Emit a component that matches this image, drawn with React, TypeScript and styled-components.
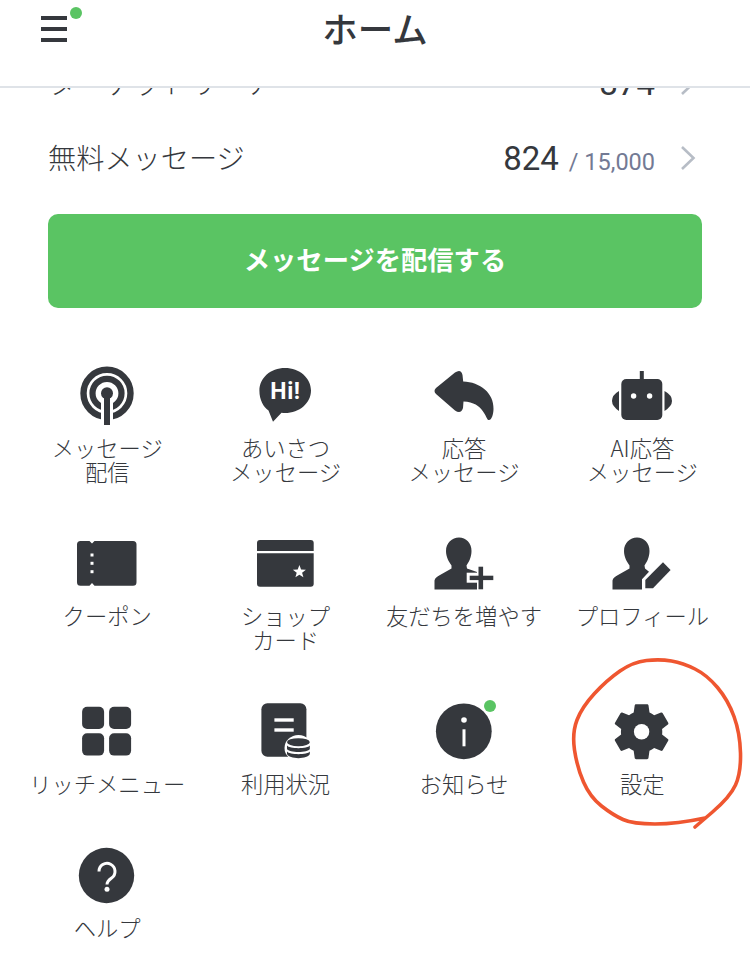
import React from "react";
import styled, { createGlobalStyle } from "styled-components";

const INK = "#35383d";
const GREEN = "#5ac463";

const Global = createGlobalStyle`
  html, body { margin: 0; padding: 0; background: #fff; }
  body { font-family: "Noto Sans CJK JP", "Noto Sans", sans-serif; color: ${INK}; }
`;

const Page = styled.div`
  position: relative;
  width: 750px;
  height: 963px;
  overflow: hidden;
  background: #fff;
`;

const Header = styled.header`
  height: 86px;
  display: flex;
  align-items: flex-start;
  justify-content: center;
  position: relative;
  border-bottom: 2px solid #dfe3e8;
  box-sizing: content-box;
`;

const Title = styled.h1`
  margin: 4px 0 0;
  font-size: 35.5px;
  line-height: 48px;
  font-weight: 500;
  color: ${INK};
`;

const MenuButton = styled.div`
  position: absolute;
  left: 41px;
  top: 16px;
  width: 26px;
  height: 26px;
  display: flex;
  flex-direction: column;
  justify-content: space-between;
`;

const MenuBar = styled.span`
  display: block;
  height: 4px;
  background: ${INK};
`;

const Dot = styled.span`
  position: absolute;
  left: 29px;
  top: -9px;
  width: 12px;
  height: 12px;
  border-radius: 50%;
  background: ${GREEN};
`;

const ClippedRow = styled.div`
  height: 33px;
  overflow: hidden;
  display: flex;
  flex-direction: column;
  justify-content: flex-end;
`;

const StatRow = styled.div`
  flex: none;
  height: 75px;
  padding: 0 54px 0 48px;
  display: flex;
  align-items: center;
  justify-content: space-between;
`;

const StatLabel = styled.span`
  font-size: 28.2px;
  font-weight: 300;
  line-height: 40px;
  padding-bottom: 4px;
`;

const StatValue = styled.div`
  display: flex;
  align-items: baseline;
  font-family: Roboto, sans-serif;
  padding-bottom: 1px;
`;

const StatNumber = styled.span`
  font-size: 33px;
  color: ${INK};
`;

const StatLimit = styled.span`
  font-size: 23.5px;
  color: #737a94;
  margin-left: 10px;
`;

const Chevron = styled.svg`
  width: 16px;
  height: 26px;
  margin-left: 25px;
  align-self: center;
  flex: none;
`;

const SendButton = styled.button`
  display: block;
  width: 654px;
  height: 94px;
  margin: 18px 0 0 48px;
  padding: 0 0 4px;
  border: 0;
  border-radius: 10px;
  background: ${GREEN};
  color: #fff;
  font: 700 26.3px/1 "Noto Sans CJK JP", sans-serif;
`;

const Grid = styled.div`
  display: grid;
  grid-template-columns: repeat(4, 178.4px);
  row-gap: 50px;
  margin: 57px 0 0 18px;
`;

const Item = styled.div`
  display: flex;
  flex-direction: column;
  align-items: center;
`;

const IconBox = styled.svg`
  display: block;
  width: 60px;
  height: 60px;
  overflow: visible;
  margin-bottom: 10px;
`;

const Label = styled.div`
  width: 190px;
  margin: 0 -6px;
  text-align: center;
  font-size: 22.3px;
  line-height: 24px;
  font-weight: 300;
  color: #35383d;
  white-space: pre-line;
`;

const Scribble = styled.svg`
  position: absolute;
  left: 0;
  top: 0;
  width: 750px;
  height: 963px;
  pointer-events: none;
`;

const IconText = styled.text`
  font-family: Roboto, sans-serif;
  font-weight: 700;
  font-size: 23px;
  letter-spacing: 0.6px;
  fill: #fff;
  text-anchor: middle;
`;

const person = (right: string) =>
  `M25 4.5C32 4.5 37.5 10 37.5 18C37.5 24 35 29 32.5 32.5L33 35.5${right}L0.5 56.5L0.5 47.5C1 45 3 43.5 6 42L17.5 35.5L17.5 32.5C15 29 12 24 12 18C12 10 18 4.5 25 4.5Z`;

const icons: Record<string, React.ReactNode> = {
  broadcast: (
    <>
      <circle cx="30" cy="28.3" r="23.5" fill="none" stroke={INK} strokeWidth="6.4" />
      <circle cx="30" cy="28.3" r="14.5" fill="none" stroke={INK} strokeWidth="6.2" />
      <rect x="24" y="28" width="12" height="32" fill="#fff" />
      <circle cx="30" cy="28.3" r="6" fill={INK} />
      <rect x="27" y="28" width="6" height="32" fill={INK} />
    </>
  ),
  hi: (
    <>
      <path
        d="M29 3C43.5 3 55 13 55 25.5C55 38 43.5 48 29 48C28 48 26.5 48 25.5 47.8L17 56.7L12.5 45.5C7.5 42 3.4 35 3.4 25.5C3.4 13 14.5 3 29 3Z"
        fill={INK}
      />
      <IconText x="29.5" y="33.5">Hi!</IconText>
    </>
  ),
  reply: (
    <path
      d="M2 23L21 7.5Q27 3.5 28.5 10L29.2 16.5C46 17 60 28 59.5 44C59.5 50 57 56 54.5 55C52 55 50 37 29.5 36.5L29 43Q27 49.5 21 45.5L2 29Q-1 26 2 23Z"
      fill={INK}
    />
  ),
  robot: (
    <>
      <rect x="27.8" y="6" width="4" height="9" fill={INK} />
      <rect x="9.3" y="14" width="41" height="41" rx="5" fill={INK} />
      <circle cx="21.6" cy="31" r="2.7" fill="#fff" />
      <circle cx="37.6" cy="31" r="2.7" fill="#fff" />
      <path d="M7 26Q0 30 0 36Q0 41 7 46Z" fill={INK} />
      <path d="M52.5 26Q60 30 60 36Q60 41 52.5 46Z" fill={INK} />
    </>
  ),
  coupon: (
    <>
      <path
        d="M3.5 8L12.5 8L15 10.5L17.5 8L56 8Q59.5 8 59.5 11.5L59.5 49.2Q59.5 52.7 56 52.7L17.5 52.7L15 50L12.5 52.7L3.5 52.7Q0 52.7 0 49.2L0 11.5Q0 8 3.5 8Z"
        fill={INK}
      />
      <rect x="13.5" y="20.5" width="3" height="3" fill="#fff" />
      <rect x="13.5" y="28.8" width="3" height="3" fill="#fff" />
      <rect x="13.5" y="37.2" width="3" height="3" fill="#fff" />
    </>
  ),
  shopcard: (
    <>
      <path d="M4 7L54.7 7Q57.7 7 57.7 10L57.7 18L1 18L1 10Q1 7 4 7Z" fill={INK} />
      <path d="M1 20.3L57.7 20.3L57.7 50.7Q57.7 53.7 54.7 53.7L4 53.7Q1 53.7 1 50.7Z" fill={INK} />
      <path
        d="M43.4 32L45.1 36.5L49.9 36.7L46.1 39.7L47.4 44.3L43.4 41.7L39.4 44.3L40.7 39.7L36.9 36.7L41.7 36.5Z"
        fill="#fff"
      />
    </>
  ),
  addfriend: (
    <>
      <path d={person("L43 39L43 56.5")} fill={INK} />
      <rect x="32.7" y="39.7" width="11.6" height="10" fill="#fff" />
      <rect x="35.7" y="42.7" width="23.6" height="4.4" fill={INK} />
      <rect x="44.5" y="33.7" width="4.6" height="22.6" fill={INK} />
    </>
  ),
  profile: (
    <>
      <path d={person("L37 38.7L30 46.3L30 56.5")} fill={INK} />
      <path d="M51 29.3L58.6 37L41 55.3L33.3 55.3L33.3 47Z" fill={INK} />
    </>
  ),
  rich: (
    <>
      <rect x="5.1" y="5.7" width="22" height="22.3" rx="5" fill={INK} />
      <rect x="32.1" y="5.7" width="22" height="22.3" rx="5" fill={INK} />
      <rect x="5.1" y="32.3" width="22" height="22.3" rx="5" fill={INK} />
      <rect x="32.1" y="32.3" width="22" height="22.3" rx="5" fill={INK} />
    </>
  ),
  usage: (
    <>
      <rect x="5.4" y="2.3" width="45" height="53.4" rx="6" fill={INK} />
      <rect x="18.4" y="17.3" width="19.3" height="3.4" fill="#fff" />
      <rect x="18.4" y="27.3" width="19.3" height="3.4" fill="#fff" />
      <ellipse cx="42.5" cy="47" rx="14" ry="13" fill="#fff" />
      <ellipse cx="42.4" cy="41.2" rx="11.4" ry="4" fill={INK} />
      <path d="M31 44.5C33 48 52 48 53.8 44.5V48C52 52 33 52 31 48Z" fill={INK} />
      <path d="M31 50.5C33 54 52 54 53.8 50.5V53C52 58.5 33 58.5 31 53Z" fill={INK} />
    </>
  ),
  info: (
    <>
      <circle cx="29.8" cy="30.3" r="27.9" fill={INK} />
      <circle cx="30" cy="19" r="2.8" fill="#fff" />
      <rect x="28.5" y="28.3" width="3" height="17" fill="#fff" />
      <circle cx="56" cy="5" r="6" fill={GREEN} />
    </>
  ),
  gear: (
    <>
      <path
        transform="translate(-4.85 -3.74) scale(2.87)"
        d="M19.14 12.94c.04-.3.06-.61.06-.94 0-.32-.02-.64-.07-.94l2.03-1.58c.18-.14.23-.41.12-.61l-1.92-3.32c-.12-.22-.37-.29-.59-.22l-2.39.96c-.5-.38-1.03-.7-1.62-.94l-.36-2.54c-.04-.24-.24-.41-.48-.41h-3.84c-.24 0-.43.17-.47.41l-.36 2.54c-.59.24-1.13.57-1.62.94l-2.39-.96c-.22-.08-.47 0-.59.22L2.74 8.87c-.12.21-.08.47.12.61l2.03 1.58c-.05.3-.09.63-.09.94s.02.64.07.94l-2.03 1.58c-.18.14-.23.41-.12.61l1.92 3.32c.12.22.37.29.59.22l2.39-.96c.5.38 1.03.7 1.62.94l.36 2.54c.05.24.24.41.48.41h3.84c.24 0 .44-.17.47-.41l.36-2.54c.59-.24 1.13-.56 1.62-.94l2.39.96c.22.08.47 0 .59-.22l1.92-3.32c.12-.22.07-.47-.12-.61l-2.01-1.58z"
        fill={INK}
      />
      <circle cx="29.6" cy="30.7" r="7.7" fill="#fff" />
    </>
  ),
  help: (
    <>
      <circle cx="29.5" cy="30.5" r="27.7" fill={INK} />
      <path
        d="M22 26.5a8 8 0 1 1 12.6 6.4c-3 2.1-4.6 3.4-4.6 6.6"
        fill="none"
        stroke="#fff"
        strokeWidth="3"
      />
      <circle cx="30" cy="44.3" r="2.5" fill="#fff" />
    </>
  ),
};

const items = [
  ["broadcast", "メッセージ\n配信"],
  ["hi", "あいさつ\nメッセージ"],
  ["reply", "応答\nメッセージ"],
  ["robot", "AI応答\nメッセージ"],
  ["coupon", "クーポン"],
  ["shopcard", "ショップ\nカード"],
  ["addfriend", "友だちを増やす"],
  ["profile", "プロフィール"],
  ["rich", "リッチメニュー"],
  ["usage", "利用状況"],
  ["info", "お知らせ"],
  ["gear", "設定"],
  ["help", "ヘルプ"],
];

const ringPoints: [number, number][] = [
  [705, 818], [677, 824], [633, 824], [613, 815], [590, 797], [577, 767], [572, 733], [582, 707],
  [607, 680], [633, 662], [660, 659], [683, 663], [707, 675], [728, 700], [740, 733], [741, 773],
  [730, 797], [695, 827],
];

const ringPath = () => {
  let d = `M${ringPoints[0][0]} ${ringPoints[0][1]}`;
  for (let i = 1; i < ringPoints.length - 1; i++) {
    const [x, y] = ringPoints[i];
    const [nx, ny] = ringPoints[i + 1];
    d += `Q${x} ${y} ${(x + nx) / 2} ${(y + ny) / 2}`;
  }
  const last = ringPoints[ringPoints.length - 1];
  return `${d}L${last[0]} ${last[1]}`;
};

const ChevronIcon = () => (
  <Chevron viewBox="0 0 16 26">
    <path d="M2 2L13.5 13L2 24" fill="none" stroke="#b7bdc6" strokeWidth="2.6" />
  </Chevron>
);

export default function App() {
  return (
    <Page>
      <Global />
      <Header>
        <MenuButton>
          <MenuBar />
          <MenuBar />
          <MenuBar />
          <Dot />
        </MenuButton>
        <Title>ホーム</Title>
      </Header>
      <ClippedRow>
        <StatRow>
          <StatLabel>ターゲットリーチ</StatLabel>
          <StatValue>
            <StatNumber>874</StatNumber>
            <ChevronIcon />
          </StatValue>
        </StatRow>
      </ClippedRow>
      <StatRow>
        <StatLabel>無料メッセージ</StatLabel>
        <StatValue>
          <StatNumber>824</StatNumber>
          <StatLimit>/ 15,000</StatLimit>
          <ChevronIcon />
        </StatValue>
      </StatRow>
      <SendButton>メッセージを配信する</SendButton>
      <Grid>
        {items.map(([key, label]) => (
          <Item key={key}>
            <IconBox viewBox="0 0 60 60">{icons[key]}</IconBox>
            <Label>{label}</Label>
          </Item>
        ))}
      </Grid>
      <Scribble viewBox="0 0 750 963">
        <path d={ringPath()} fill="none" stroke="#ef5630" strokeWidth="3.6" strokeLinecap="round" />
      </Scribble>
    </Page>
  );
}
